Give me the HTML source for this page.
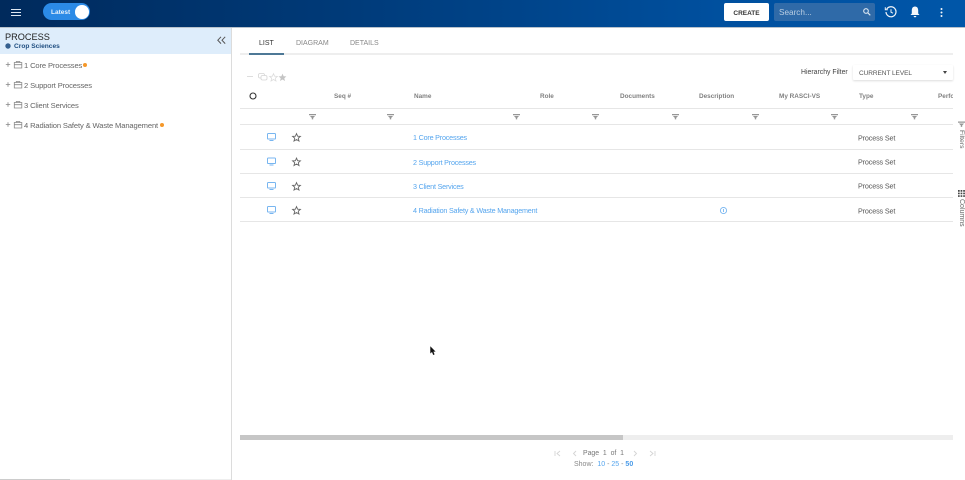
<!DOCTYPE html>
<html><head><meta charset="utf-8">
<style>
html{margin:0;padding:0;background:#fff}
body{margin:0;padding:0;background:#fff;width:965px;height:480px;position:relative;overflow:hidden;font-family:"Liberation Sans",sans-serif;color:#555;filter:blur(.3px)}
.a{position:absolute;white-space:nowrap}
.t{font-size:7.2px;letter-spacing:-.14px;line-height:10px;color:#555;transform:translateY(-.5px)}
.tr{font-size:7.6px;line-height:10px;letter-spacing:-.135px;color:#666}
.h{font-size:6.4px;line-height:10px;font-weight:bold;color:#808080;top:92px}
.l{font-size:7.2px;letter-spacing:-.2px;line-height:10px;color:#55a5ee}
.line{position:absolute;left:240px;width:713px;height:1px;background:#e6e6e6}
svg{position:absolute;overflow:visible}
</style></head><body>

<div class="a" style="left:0;top:0;width:965px;height:27px;background:linear-gradient(90deg,#002a5c 0%,#003a78 35%,#00509f 75%,#0056a8 100%)"></div>
<div class="a" style="left:0;top:27px;width:965px;height:1px;background:#b8c2cc"></div>

<svg style="left:11px;top:9px" width="10" height="7"><path d="M0 .5H10M0 3.5H10M0 6.5H10" stroke="#dfe8f2" stroke-width="1"/></svg>
<div class="a" style="left:43px;top:3px;width:47px;height:17px;border-radius:9px;background:#2b8ae6"></div>
<div class="a" style="left:51px;top:8px;font-size:6.5px;line-height:10px;font-weight:bold;color:#e8f2fc">Latest</div>
<div class="a" style="left:75px;top:5px;width:13.5px;height:13.5px;border-radius:50%;background:#fff"></div>

<div class="a" style="left:724px;top:3px;width:45px;height:18px;border-radius:2px;background:#fff"></div>
<div class="a" style="left:724px;top:9px;width:45px;color:#333;font-size:6.5px;font-weight:bold;line-height:10px;text-align:center">CREATE</div>
<div class="a" style="left:774px;top:3px;width:101px;height:18px;border-radius:2px;background:#2f6aa8"></div>
<div class="a" style="left:779px;top:8px;font-size:8.2px;line-height:10px;color:#bccfe3">Search...</div>
<svg style="left:863px;top:8px" width="8" height="8" fill="none" stroke="#dce7f2" stroke-width="1.1"><circle cx="3" cy="3" r="2.3"/><path d="M4.8 4.8L7.3 7.3"/></svg>
<svg style="left:885px;top:6px" width="12" height="12" fill="none" stroke="#f2f6fa" stroke-width="1.2"><path d="M1.7 3.2A5 5 0 1 1 1 6"/><path d="M.3 1.2V3.7H2.8" stroke-width="1"/><path d="M6 3.2V6.2L8 7.2" stroke-width="1"/></svg>
<svg style="left:910px;top:6px" width="10" height="12"><path d="M5 0.5C2.8 .5 1.8 2.3 1.8 4.5V7.5L.5 9H9.5L8.2 7.5V4.5C8.2 2.3 7.2 .5 5 .5ZM3.7 10H6.3A1.3 1.3 0 0 1 3.7 10Z" fill="#f4f7fa"/></svg>
<svg style="left:939.5px;top:8px" width="3" height="10" fill="#f4f7fa"><circle cx="1.5" cy="1" r="1"/><circle cx="1.5" cy="4.5" r="1"/><circle cx="1.5" cy="8" r="1"/></svg>

<!-- left panel -->
<div class="a" style="left:0;top:28px;width:231px;height:26px;background:#deedfb"></div>
<div class="a" style="left:231px;top:28px;width:1px;height:452px;background:#dcdcdc"></div>
<div class="a" style="left:5px;top:31px;font-size:9.2px;line-height:12px;color:#222">PROCESS</div>
<svg style="left:5px;top:43px" width="6" height="6"><circle cx="3" cy="3" r="2.7" fill="#35608f"/></svg>
<div class="a" style="left:14px;top:42px;font-size:6.6px;line-height:10px;font-weight:bold;color:#1f4e80">Crop Sciences</div>
<svg style="left:217px;top:36px" width="9" height="9" fill="none" stroke="#555" stroke-width="1"><path d="M4 .8L.8 4.2L4 7.6M8.2 .8L5 4.2L8.2 7.6"/></svg>

<svg style="left:5px;top:61px" width="18" height="70" fill="none" stroke="#888" stroke-width=".8">
<g id="i"><path d="M.8 3.5H5.2M3 1.3V5.7"/><path d="M11.3 1.5V.5H14.8V1.5M9.3 1.5H16.8V7H9.3ZM9.3 3.7H16.8"/></g>
<use href="#i" y="20"/><use href="#i" y="40"/><use href="#i" y="60"/>
</svg>
<div class="a tr" style="left:24px;top:61px">1 Core Processes</div>
<div class="a" style="left:83px;top:62.7px;width:4px;height:4px;border-radius:50%;background:#f5982a"></div>
<div class="a tr" style="left:24px;top:81px">2 Support Processes</div>
<div class="a tr" style="left:24px;top:101px">3 Client Services</div>
<div class="a tr" style="left:24px;top:121px">4 Radiation Safety &amp; Waste Management</div>
<div class="a" style="left:159.7px;top:123px;width:4px;height:4px;border-radius:50%;background:#f5982a"></div>

<!-- tabs -->
<div class="a" style="left:259px;top:39px;font-size:7px;line-height:10px;color:#333">LIST</div>
<div class="a" style="left:296px;top:39px;font-size:7px;line-height:10px;color:#888">DIAGRAM</div>
<div class="a" style="left:350px;top:39px;font-size:7px;line-height:10px;color:#888">DETAILS</div>
<div class="line" style="top:53px;background:#eee;height:2px"></div>
<div class="a" style="left:249px;top:53px;width:35px;height:2px;background:#4d7896"></div>

<!-- toolbar -->
<div class="a" style="left:247px;top:76px;width:6px;height:1px;background:#ddd"></div>
<svg style="left:258px;top:72.5px" width="10" height="8" fill="none" stroke="#d5d5d5" stroke-width=".8"><rect x=".5" y=".5" width="6" height="4.5" rx="1.5"/><rect x="3" y="2.5" width="6" height="4.5" rx="1.5" fill="#fff"/></svg>
<svg style="left:269px;top:72.5px" width="9" height="9"><path d="M4.5.6L5.6 3.2L8.4 3.4L6.3 5.2L7 8L4.5 6.5L2 8L2.7 5.2L.6 3.4L3.4 3.2Z" fill="none" stroke="#ddd" stroke-width=".8"/></svg>
<svg style="left:278px;top:72.5px" width="9" height="9"><path d="M4.5.6L5.6 3.2L8.4 3.4L6.3 5.2L7 8L4.5 6.5L2 8L2.7 5.2L.6 3.4L3.4 3.2Z" fill="#c4c4c4"/></svg>

<div class="a" style="left:801px;top:68px;font-size:6.9px;line-height:10px;color:#444">Hierarchy Filter</div>
<div class="a" style="left:852.5px;top:65px;width:100.5px;height:15px;background:#fff;box-shadow:0 1px 2px rgba(0,0,0,.14);border-radius:1px"></div>
<div class="a" style="left:859px;top:69px;font-size:6.5px;letter-spacing:-.06px;line-height:10px;color:#555">CURRENT LEVEL</div>
<div class="a" style="left:943px;top:71px;border-left:2.5px solid transparent;border-right:2.5px solid transparent;border-top:3px solid #444"></div>

<!-- header -->
<svg style="left:249px;top:92px" width="8" height="8"><circle cx="4" cy="4" r="3" fill="none" stroke="#333" stroke-width="1.1"/></svg>
<div class="a h" style="left:334px">Seq #</div>
<div class="a h" style="left:414px">Name</div>
<div class="a h" style="left:540px">Role</div>
<div class="a h" style="left:620px">Documents</div>
<div class="a h" style="left:699px">Description</div>
<div class="a h" style="left:779px">My RASCI-VS</div>
<div class="a h" style="left:859px">Type</div>
<div class="a h" style="left:938px;width:15px;overflow:hidden">Perfo</div>
<div class="line" style="top:108px"></div>
<div class="line" style="top:124px"></div>
<div class="line" style="top:149px"></div>
<div class="line" style="top:173px"></div>
<div class="line" style="top:197px"></div>
<div class="line" style="top:221px"></div>

<!-- filter icons -->
<svg style="left:0;top:0" width="965" height="160" fill="#969696">
<defs><path id="f" d="M0 0H7V1.2H0ZM1 2H6L4.6 3.6H2.4ZM2.8 3.6H4.2V5.4H2.8Z"/></defs>
<use href="#f" x="309" y="114"/><use href="#f" x="387" y="114"/><use href="#f" x="513" y="114"/><use href="#f" x="592" y="114"/><use href="#f" x="672" y="114"/><use href="#f" x="752" y="114"/><use href="#f" x="831" y="114"/><use href="#f" x="911" y="114"/><use href="#f" x="958" y="121.5"/>
</svg>

<!-- rows -->
<svg style="left:267px;top:133px" width="9" height="82" fill="none" stroke="#78b6f0" stroke-width="1">
<g id="m"><rect x=".5" y=".5" width="8" height="5.5" rx=".8"/><path d="M2.5 7.5H6.5"/></g>
<use href="#m" y="24.5"/><use href="#m" y="49"/><use href="#m" y="73"/>
</svg>
<svg style="left:292px;top:133px" width="9" height="82" fill="none" stroke="#666" stroke-width=".9">
<path id="st" d="M4.5.6L5.6 3.2L8.4 3.4L6.3 5.2L7 8L4.5 6.5L2 8L2.7 5.2L.6 3.4L3.4 3.2Z"/>
<use href="#st" y="24.5"/><use href="#st" y="49"/><use href="#st" y="73"/>
</svg>
<div class="a l" style="left:413px;top:133px">1 Core Processes</div>
<div class="a l" style="left:413px;top:158px">2 Support Processes</div>
<div class="a l" style="left:413px;top:182px">3 Client Services</div>
<div class="a l" style="left:413px;top:206px">4 Radiation Safety &amp; Waste Management</div>
<div class="a t" style="left:858px;top:134px">Process Set</div>
<div class="a t" style="left:858px;top:158px">Process Set</div>
<div class="a t" style="left:858px;top:182px">Process Set</div>
<div class="a t" style="left:858px;top:207px">Process Set</div>
<svg style="left:719.5px;top:206.5px" width="7" height="7" fill="none" stroke="#78b6f0" stroke-width=".9"><circle cx="3.5" cy="3.5" r="3.1"/><path d="M3.5 2V5"/></svg>

<!-- side tabs -->
<div class="a" style="left:958px;top:130px;font-size:6.8px;line-height:7px;color:#666;writing-mode:vertical-rl">Filters</div>
<svg style="left:958px;top:190px" width="7" height="7" fill="#444"><path d="M0 0h1.7v1.7H0zM2.6 0h1.7v1.7H2.6zM5.2 0h1.7v1.7H5.2zM0 2.6h1.7v1.7H0zM2.6 2.6h1.7v1.7H2.6zM5.2 2.6h1.7v1.7H5.2zM0 5.2h1.7v1.7H0zM2.6 5.2h1.7v1.7H2.6zM5.2 5.2h1.7v1.7H5.2z"/></svg>
<div class="a" style="left:958px;top:199px;font-size:7px;line-height:7px;color:#666;writing-mode:vertical-rl">Columns</div>

<!-- cursor -->
<svg style="left:430px;top:346px" width="6" height="10"><path d="M.3.3V7.5L2 6L3.2 9L4.6 8.4L3.4 5.6H5.6Z" fill="#111"/></svg>

<!-- scrollbar -->
<div class="a" style="left:240px;top:435px;width:713px;height:5px;background:#eeeeee"></div>
<div class="a" style="left:240px;top:435px;width:383px;height:5px;background:#c6c6c6"></div>

<!-- pager -->
<svg style="left:554px;top:449.5px" width="105" height="8" fill="none" stroke="#d4d4d4" stroke-width=".9">
<path d="M1 1V6M6 1L3 3.5L6 6M22 1L19.5 3.5L22 6M80 1L82.5 3.5L80 6M96 1L99 3.5L96 6M101 1V6"/>
</svg>
<div class="a" style="left:583px;top:449px;font-size:6.9px;line-height:10px;color:#777">Page&nbsp; 1&nbsp; of&nbsp; 1</div>
<div class="a" style="left:574px;top:460px;font-size:7px;line-height:10px;color:#888">Show:&nbsp; <span style="color:#55a5ee">10</span> - <span style="color:#55a5ee">25</span> - <span style="color:#4a9be8;font-weight:bold">50</span></div>

<div class="a" style="left:0;top:479px;width:70px;height:1px;background:#ccc"></div>
<div class="a" style="left:70px;top:479px;width:161px;height:1px;background:#eee"></div>
</body></html>
